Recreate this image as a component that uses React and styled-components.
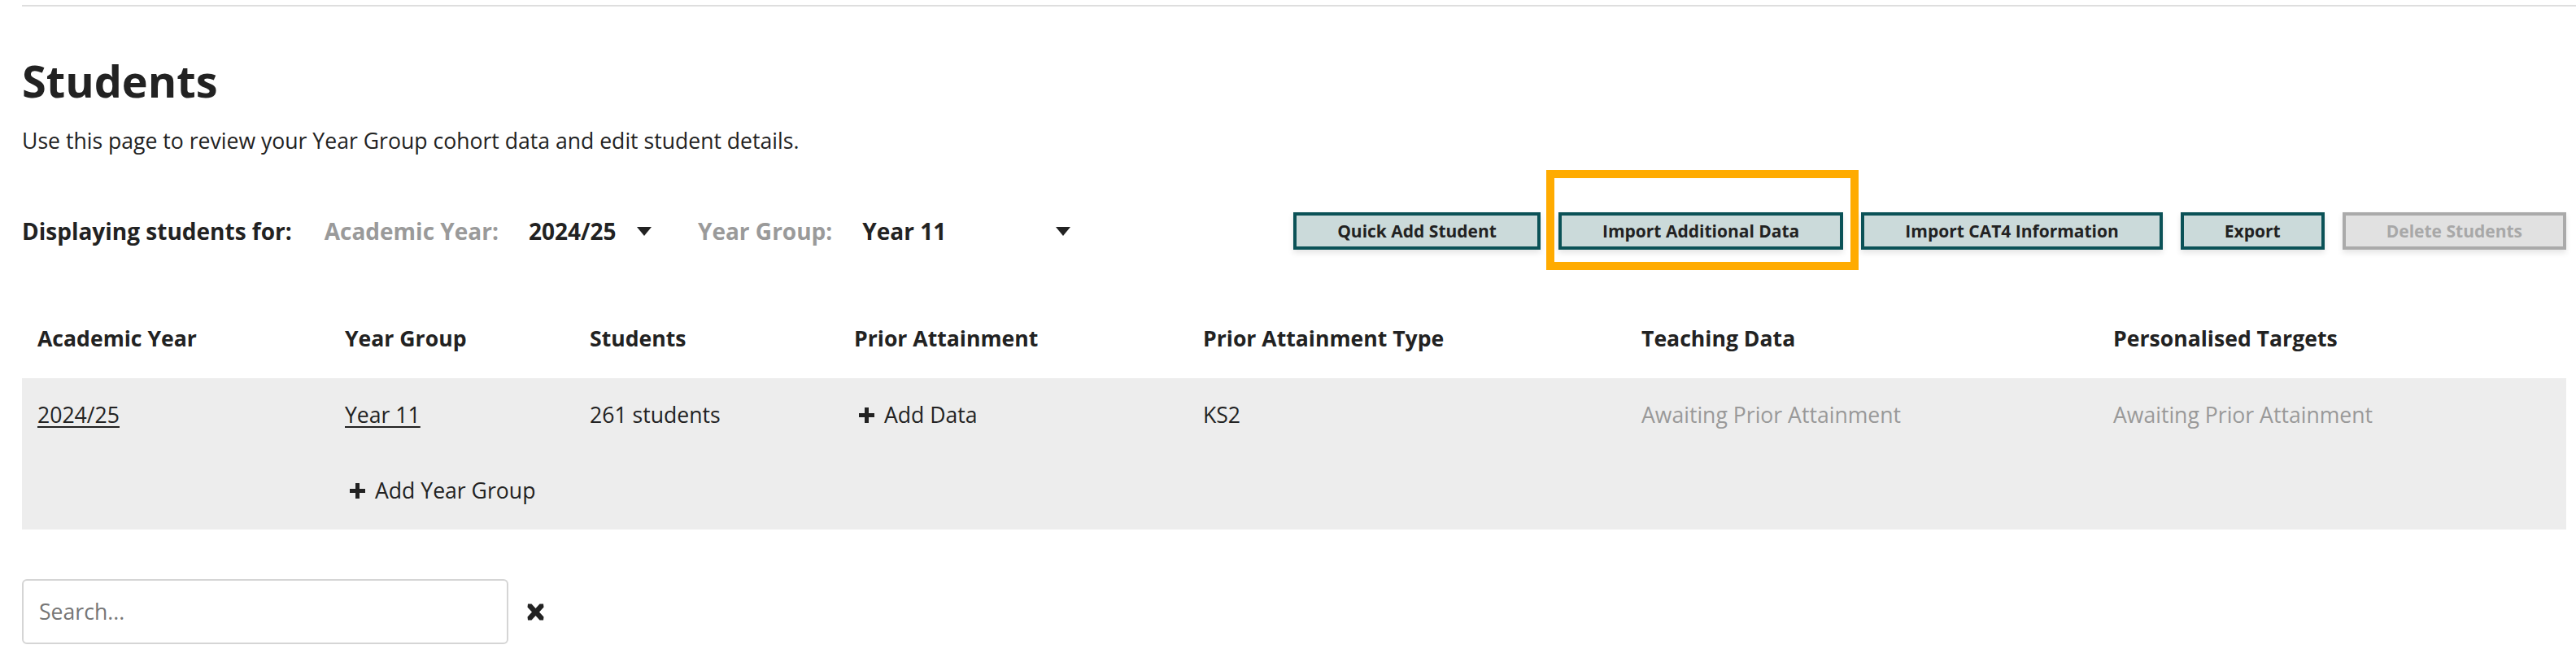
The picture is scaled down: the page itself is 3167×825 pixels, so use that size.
import React from 'react';
import styled, { createGlobalStyle } from 'styled-components';

const Global = createGlobalStyle`
  html, body { margin: 0; padding: 0; background: #fff; }
  body {
    font-family: "Open Sans", "Liberation Sans", Arial, sans-serif;
    color: #222;
  }
  * { box-sizing: border-box; }
`;

const Page = styled.div`
  padding: 6px 12px 40px 27px;
`;

const TopRule = styled.div`
  height: 2px;
  background: #dedede;
  margin-right: -12px;
`;

const Title = styled.h1`
  margin: 59px 0 0;
  font-size: 54px;
  font-weight: 700;
  line-height: 65px;
  color: #222;
`;

const Intro = styled.p`
  margin: 21px 0 0;
  font-size: 26.6px;
  line-height: 40px;
  color: #222;
`;

const FilterBar = styled.div`
  margin-top: 68px;
  height: 46px;
  display: flex;
  align-items: center;
`;

const Lead = styled.span`
  font-size: 28px;
  font-weight: 700;
  margin-right: 40px;
  white-space: nowrap;
`;

const FilterGroup = styled.div`
  display: flex;
  align-items: center;
  gap: 37px;
  & + & { margin-left: 57px; }
`;

const FilterLabel = styled.span`
  font-size: 28px;
  font-weight: 700;
  color: #9a9a9a;
  white-space: nowrap;
`;

const Select = styled.div`
  width: ${p => p.$w}px;
  display: flex;
  align-items: center;
  justify-content: space-between;
  font-size: 28px;
  font-weight: 700;
  color: #222;
  cursor: pointer;
`;

const Caret = styled.span`
  width: 0;
  height: 0;
  border-left: 9px solid transparent;
  border-right: 9px solid transparent;
  border-top: 11px solid #222;
`;

const ButtonGroup = styled.div`
  margin-left: auto;
  display: flex;
  gap: 22px;
`;

const Button = styled.button`
  height: 46px;
  padding: 0 50px;
  border: 4px solid ${p => (p.$disabled ? '#aaaaaa' : '#0b5257')};
  background: ${p => (p.$disabled ? '#e1e1e1' : '#cbdada')};
  color: ${p => (p.$disabled ? '#a8a8a8' : '#222')};
  font-family: "Open Sans", "Liberation Sans", Arial, sans-serif;
  font-size: 21px;
  font-weight: 700;
  white-space: nowrap;
  box-shadow: 0 4px 7px rgba(0, 0, 0, 0.1);
  cursor: ${p => (p.$disabled ? 'default' : 'pointer')};
`;

const Highlight = styled.div`
  position: relative;
  &::after {
    content: '';
    position: absolute;
    top: -52px;
    left: -15px;
    right: -19px;
    bottom: -25px;
    border: 10px solid #ffab00;
    pointer-events: none;
  }
`;

const columns = '378px 301px 325px 429px 539px 580px 1fr';

const TableHead = styled.div`
  margin-top: 73px;
  height: 85px;
  padding-bottom: 14px;
  display: grid;
  grid-template-columns: ${columns};
  align-items: center;
`;

const HeadCell = styled.div`
  padding-left: 19px;
  font-size: 26.6px;
  font-weight: 700;
  line-height: 40px;
  color: #222;
`;

const TableBody = styled.div`
  background: #ededed;
  padding: 25px 0 28px;
  display: grid;
  grid-template-columns: ${columns};
  row-gap: 53px;
`;

const Cell = styled.div`
  grid-column: ${p => p.$col || 'auto'};
  padding-left: 19px;
  font-size: 26.6px;
  line-height: 40px;
  color: ${p => (p.$muted ? '#999' : '#222')};
  display: flex;
  align-items: center;
`;

const Link = styled.a`
  color: #222;
  text-decoration: underline;
  text-underline-offset: 4px;
  text-decoration-thickness: 2px;
  cursor: pointer;
`;

const Action = styled.a`
  display: inline-flex;
  align-items: center;
  gap: 12px;
  padding-left: 6px;
  color: #222;
  cursor: pointer;
`;

const SearchRow = styled.div`
  margin-top: 61px;
  display: flex;
  align-items: center;
  gap: 22px;
`;

const SearchInput = styled.input`
  width: 598px;
  height: 80px;
  border: 2px solid #d5d5d5;
  border-radius: 6px;
  padding: 0 19px;
  font-family: "Open Sans", "Liberation Sans", Arial, sans-serif;
  font-size: 26.6px;
  color: #222;
  outline: none;
  &::placeholder { color: #767676; }
`;

const ClearButton = styled.button`
  border: 0;
  background: none;
  padding: 0;
  color: #222;
  display: flex;
  cursor: pointer;
`;

const PlusIcon = () => (
  <svg width="19" height="19" viewBox="0 0 19 19" aria-hidden="true">
    <path d="M7 0h5v7h7v5h-7v7H7v-7H0V7h7z" fill="currentColor" />
  </svg>
);

const TimesIcon = () => (
  <svg width="23" height="21" viewBox="0 0 23 21" aria-hidden="true">
    <path
      d="M2 0.5L6.5 0.5L11.5 6L16.5 0.5L21 0.5L21.5 4.5L16 10.5L21.5 16.5L21 20.5L16.5 20.5L11.5 15L6.5 20.5L2 20.5L1.5 16.5L7 10.5L1.5 4.5Z"
      fill="currentColor"
    />
  </svg>
);

export default function App() {
  return (
    <>
      <Global />
      <Page>
        <TopRule />
        <Title>Students</Title>
        <Intro>Use this page to review your Year Group cohort data and edit student details.</Intro>

        <FilterBar>
          <Lead>Displaying students for:</Lead>
          <FilterGroup>
            <FilterLabel>Academic Year:</FilterLabel>
            <Select $w={151}>
              <span>2024/25</span>
              <Caret />
            </Select>
          </FilterGroup>
          <FilterGroup>
            <FilterLabel>Year Group:</FilterLabel>
            <Select $w={256}>
              <span>Year 11</span>
              <Caret />
            </Select>
          </FilterGroup>

          <ButtonGroup>
            <Button>Quick Add Student</Button>
            <Highlight>
              <Button>Import Additional Data</Button>
            </Highlight>
            <Button>Import CAT4 Information</Button>
            <Button>Export</Button>
            <Button $disabled disabled>Delete Students</Button>
          </ButtonGroup>
        </FilterBar>

        <TableHead>
          <HeadCell>Academic Year</HeadCell>
          <HeadCell>Year Group</HeadCell>
          <HeadCell>Students</HeadCell>
          <HeadCell>Prior Attainment</HeadCell>
          <HeadCell>Prior Attainment Type</HeadCell>
          <HeadCell>Teaching Data</HeadCell>
          <HeadCell>Personalised Targets</HeadCell>
        </TableHead>
        <TableBody>
          <Cell><Link>2024/25</Link></Cell>
          <Cell><Link>Year 11</Link></Cell>
          <Cell>261 students</Cell>
          <Cell><Action><PlusIcon />Add Data</Action></Cell>
          <Cell>KS2</Cell>
          <Cell $muted>Awaiting Prior Attainment</Cell>
          <Cell $muted>Awaiting Prior Attainment</Cell>
          <Cell $col={2}><Action><PlusIcon />Add Year Group</Action></Cell>
        </TableBody>

        <SearchRow>
          <SearchInput placeholder="Search..." />
          <ClearButton aria-label="Clear search"><TimesIcon /></ClearButton>
        </SearchRow>
      </Page>
    </>
  );
}
